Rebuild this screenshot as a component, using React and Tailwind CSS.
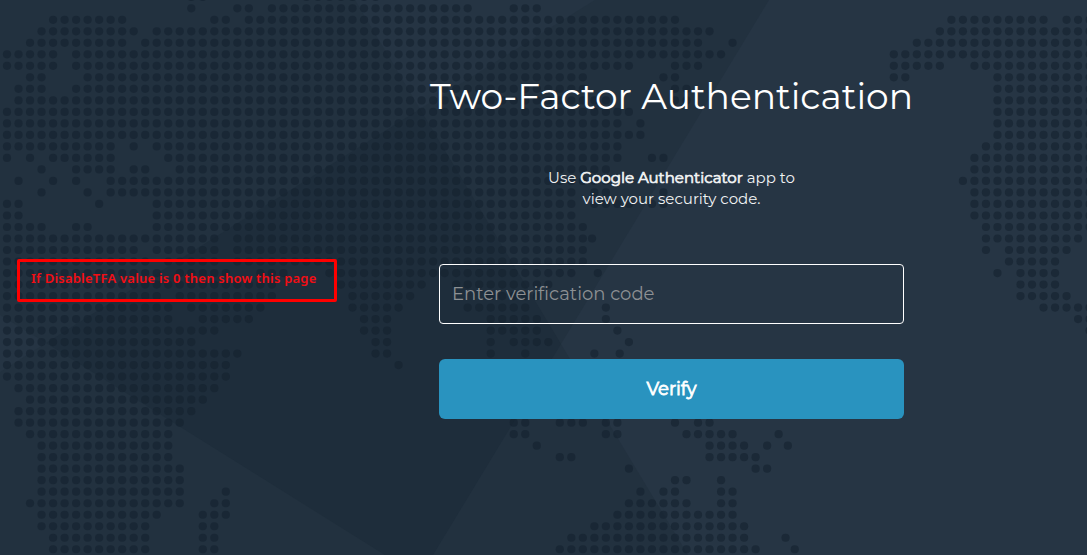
const PITCH_X = 11.517;
const PITCH_Y = 11.51;

// Each row lists the filled column spans [first, last] of the dotted map.
const ROWS = [
  [-1, [[16, 17], [26, 32]]],
  [0, [[16, 16], [20, 21], [23, 40], [44, 46]]],
  [1, [[4, 10], [18, 19], [21, 58], [82, 90], [92, 94]]],
  [2, [[3, 11], [13, 61], [81, 94]]],
  [3, [[2, 10], [12, 60], [63, 63], [79, 94]]],
  [4, [[0, 4], [6, 62], [77, 94]]],
  [5, [[0, 4], [6, 54], [58, 60], [77, 81], [84, 94]]],
  [6, [[2, 3], [7, 50], [57, 58], [77, 78], [86, 94]]],
  [7, [[1, 3], [6, 50], [58, 59], [86, 94]]],
  [8, [[1, 52], [58, 59], [86, 94]]],
  [9, [[0, 54], [86, 94]]],
  [10, [[0, 53], [55, 55], [86, 94]]],
  [11, [[0, 55], [86, 94]]],
  [12, [[0, 9], [11, 11], [13, 53], [85, 94]]],
  [13, [[0, 0], [2, 2], [4, 9], [14, 53], [56, 57], [84, 94]]],
  [14, [[3, 3], [6, 9], [11, 12], [15, 52], [84, 94]]],
  [15, [[1, 1], [4, 4], [6, 6], [9, 52], [83, 94]]],
  [16, [[3, 3], [7, 7], [9, 49], [51, 52], [57, 57], [84, 94]]],
  [17, [[0, 1], [8, 8], [13, 49], [51, 54], [56, 57], [84, 94]]],
  [18, [[0, 1], [13, 49], [84, 94]]],
  [19, [[0, 3], [6, 7], [13, 50], [85, 94]]],
  [20, [[0, 12], [13, 18], [20, 50], [50.8, 50.8], [85, 93]]],
  [21, [[0, 11], [13, 18], [20, 50], [85, 85], [87, 92]]],
  [22, [[0, 12], [14, 18], [20, 50], [87, 91]]],
  [23, [[0, 13], [15, 19], [22, 24], [28, 49], [51.3, 51.3], [86, 86], [88, 91]]],
  [24, [[0, 23], [29, 36], [39, 47], [88, 91]]],
  [25, [[0, 13], [15, 23], [30, 35], [42, 46], [88, 92]]],
  [26, [[0, 14], [16, 22], [30, 34], [40, 45], [52, 52], [90, 94]]],
  [27, [[0, 14], [17, 21], [31, 33], [42, 46], [52, 52], [93, 94]]],
  [28, [[0, 18], [31, 33], [42, 46], [53, 53], [94, 94]]],
  [29, [[0, 16], [32, 33], [42, 42], [44, 47], [54, 54]]],
  [30, [[0, 20], [32, 33], [42, 42], [45, 45], [51, 51], [53.2, 53.2]]],
  [31, [[0, 19], [34, 34]]],
  [32, [[0, 19]]],
  [33, [[1, 18]]],
  [34, [[2, 17]]],
  [35, [[1, 16]]],
  [36, [[1, 15], [44, 45], [48, 50], [52, 53], [58, 58], [60, 61]]],
  [37, [[2, 14], [44, 45], [52, 53], [59, 63], [67, 67]]],
  [38, [[3, 14], [46, 46], [61, 64], [66, 66], [67.8, 67.8]]],
  [39, [[3, 14], [48, 49], [61, 65]]],
  [40, [[3, 15], [54, 54], [65, 66]]],
  [41, [[3, 15], [58, 59], [62, 62]]],
  [42, [[3, 15], [19, 19], [55, 55], [57, 58], [62, 63]]],
  [43, [[2, 15], [18, 19], [54, 59], [62, 63]]],
  [44, [[3, 13], [17, 19], [53, 63]]],
  [45, [[3, 12], [17, 18], [51, 64]]],
  [46, [[4, 12], [17, 18], [49, 64], [67.6, 67.6]]],
  [47, [[4, 12], [17, 18], [48, 65], [68.4, 68.4]]],
];

const DOTS = ROWS.flatMap(([row, spans]) =>
  spans.flatMap(([from, to]) => {
    const cells = [];
    for (let c = from; c <= to; c += 1) cells.push([7 + c * PITCH_X, 8.3 + row * PITCH_Y]);
    return cells;
  })
);

function Backdrop() {
  return (
    <svg className="absolute inset-0 h-full w-full" viewBox="0 0 1087 555" aria-hidden="true">
      <rect width="1087" height="555" fill="#22313f" />
      <polygon points="355,0 595,0 420,109" fill="#253443" />
      <polygon points="46,343 420,109 561,344 433,555 385,555" fill="#1e2d3b" />
      <polygon points="0,315 46,343 0,372" fill="#253443" />
      <polygon points="769,0 1087,0 1087,555 688,555 561,344" fill="#263544" />
      <g fill="#14212e" fillOpacity="0.6">
        {DOTS.map(([x, y], i) => (
          <circle key={i} cx={x} cy={y} r="4.1" />
        ))}
      </g>
    </svg>
  );
}

function Note() {
  return (
    <aside className="mt-[259px] ml-[17px] flex h-[43px] w-[320px] shrink-0 rounded-[2px] border-3 border-[#ff0000] pl-[11px] pt-[6px]">
      <p className="whitespace-nowrap font-['Noto_Sans',sans-serif] text-[13px] leading-[20px] font-semibold tracking-[0.22px] text-[#f30d14]">
        If DisableTFA value is 0 then show this page
      </p>
    </aside>
  );
}

export default function App() {
  return (
    <main className="relative h-[555px] w-full overflow-hidden bg-[#22313f] font-['Montserrat','Inter',sans-serif] text-white">
      <Backdrop />
      <div className="relative flex h-full items-start">
        <Note />
        <form className="ml-[102px] flex w-[465px] shrink-0 flex-col items-center pt-[72px]" onSubmit={(e) => e.preventDefault()}>
          <h1 className="whitespace-nowrap text-[36px] leading-[48px] font-normal">Two-Factor Authentication</h1>
          <p className="mt-[47px] whitespace-nowrap text-center text-[15px] leading-[21px] text-[#f1f3f4]">
            <span>
              Use <strong className="font-normal [-webkit-text-stroke:0.7px_#f1f3f4]">Google Authenticator</strong> app to
            </span>
            <br />
            <span>view your security code.</span>
          </p>
          <input
            type="text"
            placeholder="Enter verification code"
            className="mt-[55px] h-[60px] w-full rounded-[4px] border border-white bg-transparent px-[12px] text-[18px] text-white outline-none placeholder:text-[#8d9093]"
          />
          <button type="submit" className="mt-[35px] h-[60px] w-full rounded-[6px] bg-[#2993bf] text-[18px] font-normal [-webkit-text-stroke:0.8px_#ffffff]">
            Verify
          </button>
        </form>
      </div>
    </main>
  );
}
